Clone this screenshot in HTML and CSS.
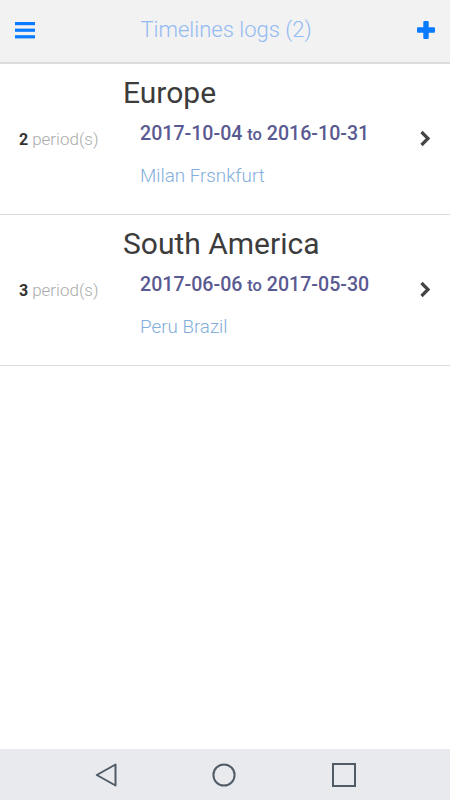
FILE: index.html
```html
<!DOCTYPE html>
<html>
<head>
<meta charset="utf-8">
<link rel="stylesheet" href="styles.css">
</head>
<body>
<div class="app">
  <header class="topbar">
    <button class="icon-btn menu" aria-label="menu">
      <svg width="20" height="17" viewBox="0 0 20 17"><rect x="0" y="0" width="20" height="3.2" fill="#0a7bff"/><rect x="0" y="6.6" width="20" height="3.2" fill="#0a7bff"/><rect x="0" y="13.2" width="20" height="3.2" fill="#0a7bff"/></svg>
    </button>
    <h1 class="title">Timelines logs (2)</h1>
    <button class="icon-btn add" aria-label="add">
      <svg width="18" height="18" viewBox="0 0 18 18"><rect x="6.3" y="0" width="5.4" height="18" rx="1" fill="#0a7bff"/><rect x="0" y="6.3" width="18" height="5.4" rx="1" fill="#0a7bff"/></svg>
    </button>
  </header>
  <main class="list">
    <div class="item">
      <div class="count"><b>2</b> <span class="lbl">period(s)</span></div>
      <div class="body">
        <div class="name">Europe</div>
        <div class="details">
          <div class="dates">2017-10-04 <span class="to">to</span> 2016-10-31</div>
          <div class="places">Milan Frsnkfurt</div>
        </div>
      </div>
      <div class="chev">
        <svg width="12" height="17" viewBox="0 0 12 17"><polyline points="2.5,2 9,8.5 2.5,15" fill="none" stroke="#444" stroke-width="3.2" stroke-linejoin="miter" stroke-linecap="butt"/></svg>
      </div>
    </div>
    <div class="item">
      <div class="count"><b>3</b> <span class="lbl">period(s)</span></div>
      <div class="body">
        <div class="name">South America</div>
        <div class="details">
          <div class="dates">2017-06-06 <span class="to">to</span> 2017-05-30</div>
          <div class="places">Peru Brazil</div>
        </div>
      </div>
      <div class="chev">
        <svg width="12" height="17" viewBox="0 0 12 17"><polyline points="2.5,2 9,8.5 2.5,15" fill="none" stroke="#444" stroke-width="3.2" stroke-linejoin="miter" stroke-linecap="butt"/></svg>
      </div>
    </div>
  </main>
  <nav class="navbar">
    <svg width="22" height="24" viewBox="0 0 22 24"><polygon points="20.5,1.5 20.5,22.5 1.8,12" fill="none" stroke="#505b66" stroke-width="2" stroke-linejoin="round"/></svg>
    <svg width="24" height="24" viewBox="0 0 24 24"><circle cx="12" cy="12" r="10.6" fill="none" stroke="#505b66" stroke-width="2"/></svg>
    <svg width="24" height="24" viewBox="0 0 24 24"><rect x="1" y="1" width="22" height="22" fill="none" stroke="#505b66" stroke-width="2"/></svg>
  </nav>
</div>
</body>
</html>
```
FILE: styles.css
```css
* { box-sizing: border-box; }
html, body { margin: 0; padding: 0; }
body {
  font-family: Roboto, "Liberation Sans", sans-serif;
  background: #fff;
}
.app {
  display: flex;
  flex-direction: column;
  height: 100vh;
}
.topbar {
  height: 64px;
  flex: none;
  display: flex;
  align-items: center;
  justify-content: space-between;
  background: #f2f2f2;
  border-bottom: 2px solid #dcdcdc;
  padding: 0 15px 2px 15px;
}
.icon-btn {
  background: none;
  border: 0;
  padding: 0;
  display: flex;
  align-items: center;
}
.menu { width: 20px; }
.add { width: 18px; }
.title {
  margin: 0;
  font-family: "Roboto Light", Roboto, sans-serif;
  font-size: 22px;
  font-weight: 300;
  color: #92bbf3;
  line-height: 26px;
}
.list {
  flex: 1;
}
.item {
  height: 151px;
  display: flex;
  border-bottom: 1px solid #dcdcdc;
}
.count {
  width: 123px;
  padding-left: 19px;
  align-self: center;
  font-size: 16px;
  color: #333;
  padding-bottom: 1px;
}
.count b {
  font-weight: 700;
}
.lbl {
  font-family: "Roboto Light", Roboto, sans-serif;
  font-weight: 300;
  font-size: 17px;
  color: #ababab;
}
.body {
  flex: 1;
  padding-top: 11px;
}
.name {
  font-size: 30px;
  line-height: 36px;
  color: #3c3c3c;
  font-weight: 400;
}
.details {
  padding-left: 17px;
}
.dates {
  margin-top: 13px;
  font-size: 19.6px;
  line-height: 20px;
  font-weight: 500;
  color: #5a5a92;
}
.to {
  font-size: 16.5px;
}
.places {
  margin-top: 20px;
  font-family: "Roboto Light", Roboto, sans-serif;
  font-size: 18.8px;
  line-height: 22px;
  font-weight: 300;
  color: #82aedb;
}
.chev {
  align-self: center;
  width: 12px;
  margin-right: 19px;
  display: flex;
  padding-bottom: 2px;
}
.navbar {
  height: 51px;
  flex: none;
  background: #e9eaed;
  display: flex;
  align-items: center;
  justify-content: center;
  gap: 95.5px;
}
```
